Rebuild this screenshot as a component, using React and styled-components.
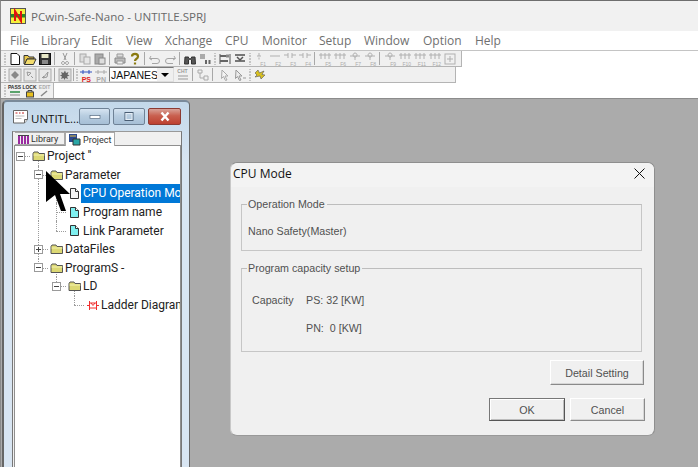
import React from "react";
import styled, { createGlobalStyle } from "styled-components";

const GlobalStyle = createGlobalStyle`
  html, body { margin: 0; padding: 0; background: #ababab; }
  body { font-family: "Open Sans", "Liberation Sans", sans-serif; }
`;

const Page = styled.div`
  width: 698px;
  height: 467px;
  display: flex;
  flex-direction: column;
  overflow: hidden;
  background: #fff;
  border-top: 1px solid #6e6e6e;
  border-left: 1px solid #8a8a8a;
  box-sizing: border-box;
`;

const TitleBar = styled.div`
  height: 30px;
  background: #f1f1f1;
  display: flex;
  align-items: center;
  gap: 5px;
  padding-left: 9px;
  font-size: 11.6px;
  color: #6a6a6a;
  flex: none;
`;

const MenuBar = styled.div`
  height: 19px;
  display: flex;
  align-items: center;
  padding-left: 9px;
  font-size: 12px;
  color: #707070;
  border-bottom: 1px solid #c4c4c4;
  flex: none;
`;

const MenuItem = styled.span`
  width: ${(p) => p.$w}px;
  flex: none;
`;

const ToolRow = styled.div`
  width: ${(p) => p.$w}px;
  height: ${(p) => p.$h}px;
  background: #f0f0f0;
  border-right: 1px solid #b4b4b4;
  border-bottom: ${(p) => (p.$flat ? "0" : "1px solid #b4b4b4")};
  display: flex;
  align-items: center;
  padding-left: 1px;
  box-sizing: border-box;
  flex: none;
`;

const Grip = styled.span`
  width: ${(p) => p.$w || 5}px;
  height: 12px;
  flex: none;
  background: radial-gradient(circle, #9a9a9a 0.7px, transparent 0.8px) center / 2px 3px repeat-y;
`;

const Sep = styled.span`
  width: ${(p) => p.$w || 5}px;
  height: 13px;
  flex: none;
  background: linear-gradient(#a8a8a8, #a8a8a8) center / 1px 100% no-repeat;
`;

const Spacer = styled.span`
  width: ${(p) => p.$w}px;
  flex: none;
`;

const ToolBtn = styled.span`
  width: 15px;
  height: 14px;
  flex: none;
  display: flex;
  align-items: center;
  justify-content: center;
  position: relative;
`;

const FLabel = styled.span`
  position: absolute;
  bottom: -1px;
  right: ${(p) => (p.$strong ? 2 : 1)}px;
  font: ${(p) => (p.$strong ? "bold 7px" : "5px")} "Liberation Sans", sans-serif;
  color: ${(p) => p.$c || "#aaa"};
`;

const TinyLabel = styled.span`
  position: absolute;
  top: 0;
  left: 0;
  right: 0;
  text-align: center;
  font: bold 5px "Liberation Sans", sans-serif;
  color: ${(p) => p.$c || "#333"};
`;

const LangSelect = styled.div`
  width: 65px;
  height: 15px;
  flex: none;
  box-sizing: border-box;
  background: #fff;
  border: 1px solid #777;
  border-right-color: #ddd;
  border-bottom-color: #ddd;
  display: flex;
  align-items: center;
  font: 10.5px "Liberation Sans", sans-serif;
  color: #111;
`;

const LangText = styled.span`
  width: 46px;
  overflow: hidden;
  padding-left: 1px;
`;

const LangArrow = styled.span`
  flex: 1;
  align-self: stretch;
  background: #efefef;
  display: flex;
  align-items: center;
  justify-content: center;
  &::before {
    content: "";
    border: 4px solid transparent;
    border-top: 4px solid #000;
    border-bottom: 0;
  }
`;

const Workspace = styled.div`
  flex: 1;
  position: relative;
  background: #ababab;
  border-top: 1px solid #8c8c8c;
`;

/* MDI child window */
const ChildWindow = styled.div`
  position: absolute;
  left: 1px;
  top: 1px;
  width: 188px;
  height: 380px;
  box-sizing: border-box;
  border: 2px solid #666;
  border-right-width: 1px;
  border-top-color: #7a8a9a;
  border-radius: 5px 5px 0 0;
  background: linear-gradient(#c3d8ea, #d8e5f2 60px);
  padding: 0 7px;
  display: flex;
  flex-direction: column;
`;

const ChildTitle = styled.div`
  height: 29px;
  flex: none;
  display: flex;
  align-items: center;
  font: 11.5px "Open Sans", sans-serif;
  color: #111;
  gap: 2px;
  padding-left: 1px;
  box-sizing: border-box;
`;

const ChildName = styled.span`
  width: 46px;
  padding-top: 3px;
  white-space: nowrap;
  flex: none;
`;

const WinBtn = styled.span`
  width: ${(p) => p.$w}px;
  height: 17px;
  flex: none;
  margin-right: ${(p) => p.$mr || 0}px;
  box-sizing: border-box;
  display: flex;
  align-items: center;
  justify-content: center;
  border: 1px solid ${(p) => (p.$close ? "#8c3a32" : "#6f8296")};
  border-radius: 2px;
  background: ${(p) =>
    p.$close
      ? "linear-gradient(#d9a197, #c9604f 45%, #bd4030)"
      : "linear-gradient(#d6e4f1, #b8cde0 45%, #a6bfd6)"};
`;

const ChildInner = styled.div`
  flex: 1;
  margin-left: 1px;
  width: 170px;
  border-left: 1px solid #777;
  border-right: 1px solid #777;
  border-top: 1px solid #999;
  background: #f0f0f0;
  display: flex;
  flex-direction: column;
  box-sizing: border-box;
`;

const TabStrip = styled.div`
  height: 13px;
  flex: none;
  display: flex;
  padding-left: 2px;
  position: relative;
  z-index: 1;
`;

const Tab = styled.div`
  width: ${(p) => p.$w}px;
  height: ${(p) => (p.$active ? 14 : 13)}px;
  box-sizing: border-box;
  border: 1px solid #a8a8a8;
  border-left-width: ${(p) => (p.$active ? 1 : 0)}px;
  border-bottom: ${(p) => (p.$active ? "0" : "1px solid #a8a8a8")};
  background: ${(p) => (p.$active ? "#fff" : "#f0f0f0")};
  display: flex;
  align-items: center;
  gap: 2px;
  padding-left: 2px;
  font: 9px Roboto, sans-serif;
  color: #333;
`;

const TreePanel = styled.div`
  flex: 1;
  margin-left: 1px;
  padding-top: 1px;
  background: #fff;
  border: 1px solid #8f8f8f;
  border-bottom: 0;
  overflow: hidden;
`;

const Row = styled.div`
  height: 18.6px;
  margin-left: -3px;
  display: flex;
  align-items: stretch;
  white-space: nowrap;
  font: 12px Roboto, sans-serif;
  color: #222;
`;

const Cell = styled.span`
  width: 18px;
  flex: none;
  position: relative;
  display: flex;
  align-items: center;
  justify-content: center;
  &::before {
    content: "";
    position: absolute;
    left: 8px;
    top: ${(p) => (p.$up ? "0" : "50%")};
    bottom: ${(p) => (p.$down ? "0" : "50%")};
    border-left: 1px dotted #9c9c9c;
  }
  &::after {
    content: "";
    position: absolute;
    left: 8px;
    right: ${(p) => (p.$right ? "0" : "100%")};
    top: 50%;
    border-top: 1px dotted #9c9c9c;
  }
`;

const Expander = styled.span`
  width: 9px;
  height: 9px;
  box-sizing: border-box;
  border: 1px solid #9a9a9a;
  background: #fff;
  position: relative;
  z-index: 1;
  margin-left: -1px;
  display: flex;
  align-items: center;
  justify-content: center;
  &::before {
    content: "";
    width: 5px;
    height: 1px;
    background: #444;
    position: absolute;
  }
  &::after {
    content: "";
    width: 1px;
    height: ${(p) => (p.$plus ? "5px" : "0")};
    background: #444;
    position: absolute;
  }
`;

const Label = styled.span`
  padding: 0 2px;
  height: 100%;
  display: flex;
  align-items: center;
  background: ${(p) => (p.$selected ? "#0078d7" : "transparent")};
  color: ${(p) => (p.$selected ? "#fff" : "#222")};
  flex: ${(p) => (p.$selected ? 1 : "none")};
  margin-left: -3px;
`;

const IconSlot = styled.span`
  position: relative;
  z-index: 1;
  display: flex;
  margin-left: -1px;
`;

/* Dialog */
const Dialog = styled.div`
  position: absolute;
  left: 229px;
  top: 63px;
  width: 425px;
  height: 274px;
  box-sizing: border-box;
  background: #f0f0f0;
  border: 1px solid #8e8e8e;
  border-left-color: #c8c8c8;
  border-bottom-color: #999;
  border-radius: 7px;
  display: flex;
  flex-direction: column;
  font: 10.7px "Liberation Sans", sans-serif;
  color: #505050;
`;

const DialogHead = styled.div`
  height: 24px;
  flex: none;
  box-sizing: border-box;
  background: #f3f3f3;
  border-radius: 7px 7px 0 0;
  display: flex;
  align-items: flex-start;
  justify-content: space-between;
  padding: 2px 9px 0 2px;
  font: 12px "Open Sans", sans-serif;
  color: #111;
`;

const CloseMark = styled.span`
  display: flex;
  padding-top: 3px;
`;

const DialogBody = styled.div`
  flex: 1;
  padding: 11px 12px 0 10px;
  display: flex;
  flex-direction: column;
`;

const Group = styled.fieldset`
  margin: 0;
  padding: 0;
  height: ${(p) => p.$h}px;
  flex: none;
  box-sizing: border-box;
  border: 1px solid #c6c6c6;
  border-top-color: #bdbdbd;
  margin-bottom: ${(p) => p.$mb || 0}px;
  min-inline-size: 0;
`;

const Legend = styled.legend`
  margin-left: 5px;
  padding: 0 2px 0 1px;
  line-height: 12px;
`;

const GroupText = styled.div`
  padding: 15px 0 0 6px;
`;

const CapacityGrid = styled.div`
  display: grid;
  grid-template-columns: 54px auto;
  grid-auto-rows: 28px;
  padding: 12px 0 0 10px;
  align-items: center;
`;

const ButtonRow = styled.div`
  display: flex;
  justify-content: flex-end;
  gap: 5px;
  margin-top: ${(p) => p.$mt}px;
  margin-right: ${(p) => p.$mr}px;
`;

const Btn = styled.button`
  width: ${(p) => p.$w}px;
  height: ${(p) => p.$h}px;
  padding: 0;
  background: #f0f0f0;
  font: 10.7px "Liberation Sans", sans-serif;
  color: #505050;
  box-sizing: border-box;
  border: 1px solid;
  border-color: #fff #8a8a8a #8a8a8a #fff;
  box-shadow: inset -1px -1px 0 #d6d6d6;
  ${(p) => p.$primary && "border-color: #777 #555 #555 #777; box-shadow: inset 1px 1px 0 #fff, inset -1px -1px 0 #bdbdbd;"}
`;

const CursorOverlay = styled.svg`
  position: absolute;
  left: 44px;
  top: 71px;
  z-index: 5;
`;

const IconSvg = styled.svg`
  flex: none;
  display: block;
`;

const S = ({ children, w = 14, h = 14 }) => (
  <IconSvg width={w} height={h} viewBox={`0 0 ${w} ${h}`} fill="none">
    {children}
  </IconSvg>
);

const icons = {
  new: <path d="M3 1.500h6l2.500 2.500v8.500H3z" fill="#fff" stroke="#111" />,
  open: (
    <>
      <path d="M1 3.500h4l1 1.500h5v2H4l-2 5H1z" fill="#e8c74a" stroke="#333" />
      <path d="M4 7h9l-2.500 5.500H1.500z" fill="#f3dc6c" stroke="#333" />
    </>
  ),
  save: (
    <>
      <rect x="1.500" y="1.500" width="11" height="11" fill="#333" stroke="#111" />
      <rect x="3.500" y="2" width="7" height="4" fill="#e8e8c8" />
      <rect x="4" y="8" width="6" height="4" fill="#888" />
    </>
  ),
  cut: <path d="M5 1l3 7M9 1L6 8M5 9.500a1.500 1.500 0 1 0 .1 0M9 9.500a1.500 1.500 0 1 0 .1 0" stroke="#999" />,
  copy: (
    <>
      <rect x="2" y="2" width="6" height="8" fill="#ddd" stroke="#aaa" />
      <rect x="6" y="5" width="6" height="7" fill="#e6e6e6" stroke="#aaa" />
    </>
  ),
  paste: (
    <>
      <rect x="2" y="2" width="8" height="10" fill="#aaa" stroke="#888" />
      <rect x="6" y="6" width="6" height="6" fill="#ddd" stroke="#888" />
    </>
  ),
  print: (
    <>
      <path d="M4 2h6v3H4z" fill="#ddd" stroke="#999" />
      <path d="M2 6h10v5H2z" fill="#bbb" stroke="#888" />
      <path d="M4 9h6v3H4z" fill="#eee" stroke="#999" />
    </>
  ),
  help: <path d="M4 4.500C4 1 10 1 10 4.500 10 7 7 6.500 7 9M7 10.500v2" stroke="#8a7a10" strokeWidth="2.200" />,
  undo: <path d="M3 4l-1.500 2.500L4 8M2 6.500h7a2.500 2.500 0 0 1 0 5H4" stroke="#a5a5a5" />,
  redo: <path d="M11 4l1.500 2.500L10 8M12 6.500H5a2.500 2.500 0 0 0 0 5h5" stroke="#a5a5a5" />,
  find: (
    <>
      <path d="M2 5h3.500v7H1.500zM8.500 5H12l.5 7H8.500z" fill="#555" stroke="#333" />
      <rect x="5" y="6" width="4" height="2" fill="#555" />
    </>
  ),
  replace: (
    <>
      <rect x="2" y="2" width="5" height="5" fill="#aaa" />
      <path d="M7 8h2v4H7zM10.500 8h2v4h-2z" fill="#666" />
    </>
  ),
  ladderA: (
    <>
      <path d="M2 2v10M12 2v10" stroke="#555" />
      <path d="M2 4h6M2 9h8" stroke="#666" strokeWidth="2" />
      <rect x="8" y="2.500" width="3" height="3" fill="#888" />
    </>
  ),
  ladderB: (
    <>
      <path d="M2 3h10M2 9h10" stroke="#777" strokeWidth="2" />
      <path d="M4 5l3 3 3-3" stroke="#555" strokeWidth="1.500" />
    </>
  ),
  boxA: (
    <>
      <rect x="1" y="1" width="12" height="12" fill="#e2e2e2" stroke="#aaa" />
      <path d="M7 3l4 4-4 4-4-4z" fill="#888" />
    </>
  ),
  boxB: (
    <>
      <rect x="1" y="1" width="12" height="12" fill="#e8e8e8" stroke="#aaa" />
      <path d="M4 4l4 1-3 3zM8 8l2 2" stroke="#999" />
    </>
  ),
  boxC: (
    <>
      <rect x="1" y="1" width="12" height="12" fill="#e8e8e8" stroke="#aaa" />
      <path d="M10 4L9 9 5 10zM4 10l2-2" stroke="#999" />
    </>
  ),
  burst: (
    <>
      <rect x="1" y="1" width="12" height="12" fill="#ddd" stroke="#aaa" />
      <path d="M7 2.500l1 2.500 2.500-1-1 2.500 2 1-2.500 1 1 2.500-2.500-1-1 2-1-2-2.500 1 1-2.500-2-1 2-1-1-2.500 2.500 1z" fill="#666" />
    </>
  ),
  boxF: (
    <>
      <rect x="2" y="2" width="10" height="10" stroke="#b0b0b0" />
      <path d="M4 7h6M7 4v6" stroke="#b0b0b0" />
    </>
  ),
  tree: <path d="M2 2h4v3H2zM8 8h4v4H8zM4 5v5h4" stroke="#aaa" />,
  arrowA: <path d="M4 2l6 6H7l2 4-1.500.5-2-4-2 2z" fill="#f4f4f4" stroke="#aaa" />,
  arrowB: <path d="M3 2l6 6H6l2 4-1.500.5-2-4-2 2zM10 10h3" fill="#ececec" stroke="#999" />,
  spark: <path d="M2 5l3-3 1.500 3L11 3 9 6.500 12 7 8 11 7 8 2 9l2-2z" fill="#d8c020" stroke="#555" strokeWidth=".6" />,
};

const Tool = ({ name }) => (
  <ToolBtn>
    <S>{icons[name]}</S>
  </ToolBtn>
);

const contactPaths = {
  up: "M6 1v3M4 4h4M6 5.500v2",
  line: "M2 4h10",
  pair: "M1 3h4M9 3h4M5 1v5M9 1v5",
  person: "M7 1a2 2 0 1 0 .1 0M2 4h10M7 5v3",
  bars: "M3 1v6M7 1v6M11 1v6M1 3h12",
};

const FKey = ({ n, kind }) => (
  <ToolBtn>
    <S>
      <path d={contactPaths[kind]} stroke="#b0b0b0" />
    </S>
    <FLabel>{n}</FLabel>
  </ToolBtn>
);

const Doc = ({ color = "#7ff0f0" }) => (
  <S w={11} h={13}>
    <path d="M1.500 1.500h5l3 3v7h-8z" fill={color} stroke="#333" />
    <path d="M6.500 1.500v3h3" fill="#fff" stroke="#333" />
  </S>
);

const Folder = () => (
  <S w={14} h={12}>
    <path d="M1 3.500l1-1.500h4l1 1.500h5.500v7H1z" fill="#dcd874" stroke="#555" />
    <path d="M1.500 5h11" stroke="#f4f2b0" />
  </S>
);

const LadderIcon = () => (
  <S w={12} h={11}>
    <path d="M2.500 1v9M9.500 1v9M0 5.500h2.500M9.500 5.500H12M2.500 3h7M2.500 8h7M4 3l2 2.500L8 3" stroke="#f03030" />
  </S>
);

const expander = (plus) => <Expander $plus={plus} />;

export default function App() {
  return (
    <>
      <GlobalStyle />
      <Page>
        <TitleBar>
          <S w={16} h={16}>
            <rect x="0.500" y="0.500" width="15" height="15" fill="#f5ef3c" stroke="#555" />
            <rect x="1" y="6" width="14" height="3.500" fill="#2a8a20" />
            <path d="M5 13V3l6 10V3" stroke="#e01010" strokeWidth="2" />
          </S>
          <span>PCwin-Safe-Nano - UNTITLE.SPRJ</span>
        </TitleBar>
        <MenuBar>
          <MenuItem $w={31}>File</MenuItem>
          <MenuItem $w={50}>Library</MenuItem>
          <MenuItem $w={35}>Edit</MenuItem>
          <MenuItem $w={39}>View</MenuItem>
          <MenuItem $w={60}>Xchange</MenuItem>
          <MenuItem $w={37}>CPU</MenuItem>
          <MenuItem $w={57}>Monitor</MenuItem>
          <MenuItem $w={45}>Setup</MenuItem>
          <MenuItem $w={59}>Window</MenuItem>
          <MenuItem $w={52}>Option</MenuItem>
          <MenuItem $w={40}>Help</MenuItem>
        </MenuBar>
        <ToolRow $w={461} $h={16}>
          <Grip />
          <Tool name="new" />
          <Tool name="open" />
          <Tool name="save" />
          <Sep />
          <Tool name="cut" />
          <Sep />
          <Tool name="copy" />
          <Tool name="paste" />
          <Sep />
          <Tool name="print" />
          <Tool name="help" />
          <Sep />
          <Tool name="undo" />
          <Tool name="redo" />
          <Sep />
          <Tool name="find" />
          <Tool name="replace" />
          <Grip />
          <Tool name="ladderA" />
          <Tool name="ladderB" />
          <Grip />
          <FKey n="F1" kind="up" />
          <FKey n="F2" kind="line" />
          <FKey n="F3" kind="pair" />
          <FKey n="F4" kind="pair" />
          <Sep />
          <FKey n="F5" kind="bars" />
          <FKey n="F6" kind="bars" />
          <FKey n="F7" kind="person" />
          <FKey n="F8" kind="person" />
          <Sep />
          <FKey n="F9" kind="person" />
          <FKey n="F10" kind="bars" />
          <FKey n="F11" kind="bars" />
          <FKey n="F12" kind="bars" />
          <Tool name="boxF" />
        </ToolRow>
        <ToolRow $w={455} $h={16}>
          <Grip />
          <Tool name="boxA" />
          <Tool name="boxB" />
          <Tool name="boxC" />
          <Sep />
          <Tool name="burst" />
          <Sep $w={3} />
          <Grip $w={3} />
          <ToolBtn>
            <S>
              <path d="M1 4h12M4 2v4M10 2v4" stroke="#3050c0" />
            </S>
            <FLabel $strong $c="#e02020">PS</FLabel>
          </ToolBtn>
          <ToolBtn>
            <S>
              <path d="M1 4h12M4 2v4M10 2v4" stroke="#aaa" />
            </S>
            <FLabel $strong>PN</FLabel>
          </ToolBtn>
          <Spacer $w={1} />
          <LangSelect>
            <LangText>JAPANESE</LangText>
            <LangArrow />
          </LangSelect>
          <Spacer $w={1} />
          <ToolBtn>
            <TinyLabel $c="#999">CHT</TinyLabel>
            <S>
              <path d="M2 8h10M2 11h10" stroke="#999" />
            </S>
          </ToolBtn>
          <Sep />
          <Tool name="tree" />
          <Sep />
          <Spacer $w={2} />
          <Tool name="arrowA" />
          <Tool name="arrowB" />
          <Grip />
          <Tool name="spark" />
        </ToolRow>
        <ToolRow $w={53} $h={15} $flat>
          <Grip />
          <ToolBtn>
            <TinyLabel>PASS</TinyLabel>
            <S>
              <path d="M2 8h10" stroke="#2a8a40" strokeWidth="1.500" />
              <path d="M2 11h10" stroke="#888" />
            </S>
          </ToolBtn>
          <ToolBtn>
            <TinyLabel>LOCK</TinyLabel>
            <S>
              <rect x="3.500" y="8" width="7" height="5" fill="#e8c020" stroke="#444" />
              <path d="M5 8V6.500h4V8" stroke="#444" />
            </S>
          </ToolBtn>
          <ToolBtn>
            <TinyLabel $c="#aaa">EDIT</TinyLabel>
            <S>
              <path d="M3 12l6-5" stroke="#888" strokeWidth="1.500" />
            </S>
          </ToolBtn>
        </ToolRow>
        <Workspace>
          <ChildWindow>
            <ChildTitle>
              <S w={17} h={17}>
                <path d="M1.500 2.500h14v9l-3 3.500h-11z" fill="#fff" stroke="#666" />
                <path d="M12.500 15v-3.500h3" fill="#ddd" stroke="#666" />
                <path d="M3.500 5h2M7 5h1.500M10 5h2" stroke="#c02020" />
                <path d="M3.500 8h9M3.500 10.500h6" stroke="#bbb" />
              </S>
              <ChildName>UNTITL...</ChildName>
              <WinBtn $w={31} $mr={1}>
                <S w={12} h={6}>
                  <rect x="1" y="1.500" width="10" height="3" fill="#fff" stroke="#566a80" strokeWidth=".7" />
                </S>
              </WinBtn>
              <WinBtn $w={32} $mr={1}>
                <S w={12} h={11}>
                  <rect x="2" y="1.500" width="8" height="8" fill="none" stroke="#4a5e74" />
                  <rect x="3" y="2.500" width="6" height="6" fill="none" stroke="#e6eef6" />
                </S>
              </WinBtn>
              <WinBtn $w={33} $close>
                <S w={12} h={11}>
                  <path d="M2.500 1.500l7 8M9.500 1.500l-7 8" stroke="#fff" strokeWidth="2.400" />
                </S>
              </WinBtn>
            </ChildTitle>
            <ChildInner>
              <TabStrip>
                <Tab $w={50}>
                  <S w={12} h={12}>
                    <path d="M2 3v8M5 3v8M8 3v8M11 3v8" stroke="#9a2aa0" strokeWidth="2" />
                    <path d="M1 2.500h11" stroke="#444" />
                  </S>
                  Library
                </Tab>
                <Tab $w={50} $active>
                  <S w={13} h={13}>
                    <rect x="1" y="1" width="8" height="8" fill="#2b4a90" />
                    <path d="M5 6h7v6H5z" fill="#2aa6a6" stroke="#333" />
                    <path d="M2 3h6" stroke="#e8c040" />
                  </S>
                  Project
                </Tab>
              </TabStrip>
              <TreePanel>
                <Row>
                  <Cell $right>{expander(false)}</Cell>
                  <Cell $down>
                    <IconSlot><Folder /></IconSlot>
                  </Cell>
                  <Label>Project ''</Label>
                </Row>
                <Row>
                  <Cell />
                  <Cell $up $down $right>{expander(false)}</Cell>
                  <Cell $down>
                    <IconSlot><Folder /></IconSlot>
                  </Cell>
                  <Label>Parameter</Label>
                </Row>
                <Row>
                  <Cell />
                  <Cell $up $down />
                  <Cell $up $down $right />
                  <Cell>
                    <IconSlot><Doc color="#f4f4f4" /></IconSlot>
                  </Cell>
                  <Label $selected>CPU Operation Mode</Label>
                </Row>
                <Row>
                  <Cell />
                  <Cell $up $down />
                  <Cell $up $down $right />
                  <Cell>
                    <IconSlot><Doc /></IconSlot>
                  </Cell>
                  <Label>Program name</Label>
                </Row>
                <Row>
                  <Cell />
                  <Cell $up $down />
                  <Cell $up $right />
                  <Cell>
                    <IconSlot><Doc /></IconSlot>
                  </Cell>
                  <Label>Link Parameter</Label>
                </Row>
                <Row>
                  <Cell />
                  <Cell $up $down $right>{expander(true)}</Cell>
                  <Cell>
                    <IconSlot><Folder /></IconSlot>
                  </Cell>
                  <Label>DataFiles</Label>
                </Row>
                <Row>
                  <Cell />
                  <Cell $up $right>{expander(false)}</Cell>
                  <Cell $down>
                    <IconSlot><Folder /></IconSlot>
                  </Cell>
                  <Label>ProgramS -</Label>
                </Row>
                <Row>
                  <Cell />
                  <Cell />
                  <Cell $up $right>{expander(false)}</Cell>
                  <Cell $down>
                    <IconSlot><Folder /></IconSlot>
                  </Cell>
                  <Label>LD</Label>
                </Row>
                <Row>
                  <Cell />
                  <Cell />
                  <Cell />
                  <Cell $up $right />
                  <Cell>
                    <IconSlot><LadderIcon /></IconSlot>
                  </Cell>
                  <Label>Ladder Diagram</Label>
                </Row>
              </TreePanel>
            </ChildInner>
          </ChildWindow>

          <Dialog>
            <DialogHead>
              <span>CPU Mode</span>
              <CloseMark>
                <S w={11} h={11}>
                  <path d="M0.500 0.500l10 10M10.500 0.500l-10 10" stroke="#111" />
                </S>
              </CloseMark>
            </DialogHead>
            <DialogBody>
              <Group $h={53} $mb={11}>
                <Legend>Operation Mode</Legend>
                <GroupText>Nano Safety(Master)</GroupText>
              </Group>
              <Group $h={90}>
                <Legend>Program capacity setup</Legend>
                <CapacityGrid>
                  <span>Capacity</span>
                  <span>PS: 32 [KW]</span>
                  <span />
                  <span>PN:&nbsp; 0 [KW]</span>
                </CapacityGrid>
              </Group>
              <ButtonRow $mt={8} $mr={-2}>
                <Btn $w={94} $h={25}>Detail Setting</Btn>
              </ButtonRow>
              <ButtonRow $mt={13} $mr={-3}>
                <Btn $w={76} $h={23} $primary>OK</Btn>
                <Btn $w={75} $h={23}>Cancel</Btn>
              </ButtonRow>
            </DialogBody>
          </Dialog>

          <CursorOverlay width="26" height="42" viewBox="0 0 26 42">
            <path d="M1 1v31l9-7 6 16h5l-6-17h10z" fill="#000" />
          </CursorOverlay>
        </Workspace>
      </Page>
    </>
  );
}
